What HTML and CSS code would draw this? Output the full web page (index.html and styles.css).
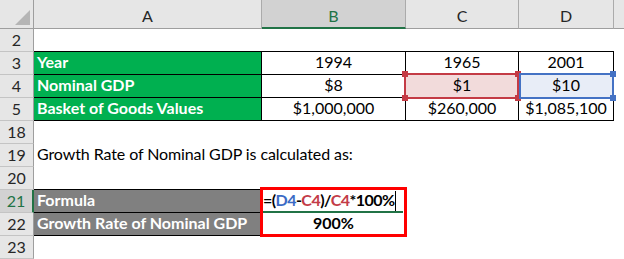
FILE: index.html
```html
<!DOCTYPE html>
<html>
<head>
<meta charset="utf-8">
<link rel="stylesheet" href="styles.css">
</head>
<body>
<div class="sheet">
  <div class="corner"><span class="tri"></span></div>
  <div class="ch">A</div>
  <div class="ch sel">B</div>
  <div class="ch">C</div>
  <div class="ch">D</div>
  <div class="ch last"></div>

  <div class="rh">2</div>
  <div class="c bb"></div><div class="c bb"></div><div class="c bb"></div><div class="c bb"></div><div class="c"></div>

  <div class="rh">3</div>
  <div class="c t lbl green">Year</div><div class="c t num">1994</div><div class="c t num">1965</div><div class="c t num">2001</div><div class="c"></div>

  <div class="rh">4</div>
  <div class="c t lbl green">Nominal GDP</div><div class="c t num">$8</div><div class="c t num pink">$1</div><div class="c t num ltblue">$10</div><div class="c"></div>

  <div class="rh">5</div>
  <div class="c t lbl green">Basket of Goods Values</div><div class="c t num">$1,000,000</div><div class="c t num">$260,000</div><div class="c t num">$1,085,100</div><div class="c"></div>

  <div class="rh">18</div>
  <div class="c"></div><div class="c"></div><div class="c"></div><div class="c"></div><div class="c"></div>

  <div class="rh">19</div>
  <div class="c text">Growth Rate of Nominal GDP is calculated as:</div><div class="c"></div><div class="c"></div><div class="c"></div><div class="c"></div>

  <div class="rh">20</div>
  <div class="c bb"></div><div class="c bb"></div><div class="c"></div><div class="c"></div><div class="c"></div>

  <div class="rh rsel">21</div>
  <div class="c t lbl gray">Formula</div><div class="c t formula">=(<span class="ref-b">D4</span>-<span class="ref-r">C4</span>)/<span class="ref-r">C4</span>*100%<span class="caret"></span></div><div class="c"></div><div class="c"></div><div class="c"></div>

  <div class="rh">22</div>
  <div class="c t lbl gray">Growth Rate of Nominal GDP</div><div class="c t num bold">900%</div><div class="c"></div><div class="c"></div><div class="c"></div>

  <div class="rh">23</div>
  <div class="c"></div><div class="c"></div><div class="c"></div><div class="c"></div><div class="c"></div>

  <div class="refbox red"><i class="h tl"></i><i class="h tr"></i><i class="h bl"></i><i class="h br"></i></div>
  <div class="refbox blue"><i class="h tr"></i><i class="h br"></i></div>
  <div class="active"><i class="ah"></i></div>
  <div class="frame"></div>
</div>
</body>
</html>
```

FILE: styles.css
```css
* { box-sizing: border-box; }
html, body { margin: 0; padding: 0; background: #fff; }
body { font-family: Lato, "Open Sans", sans-serif; font-size: 16px; color: #000; }

.sheet {
  position: relative;
  width: 624px;
  height: 259px;
  overflow: hidden;
  display: grid;
  grid-template-columns: 34px 228px 144px 113px 95px 1fr;
  grid-template-rows: 29px repeat(10, 23px);
}

.corner {
  position: relative;
  background: #e6e6e6;
  border-right: 1px solid #9e9e9e;
  border-bottom: 1px solid #9e9e9e;
}
.tri {
  position: absolute;
  left: 15px;
  top: 10px;
  width: 0;
  height: 0;
  border-left: 15px solid transparent;
  border-bottom: 15px solid #b5b5b5;
}

.ch {
  background: #e6e6e6;
  border-right: 1px solid #ababab;
  border-bottom: 1px solid #9e9e9e;
  text-align: center;
  padding-top: 5px;
  line-height: 22px;
  color: #262626;
}
.ch.sel {
  background: #d2d2d2;
  color: #217346;
  border-bottom: 2px solid #217346;
}
.ch.last { border-right: none; }

.rh {
  background: #e6e6e6;
  border-right: 1px solid #9e9e9e;
  border-bottom: 1px solid #c4c4c4;
  text-align: center;
  line-height: 21px;
  color: #262626;
}
.rh.rsel {
  background: #d2d2d2;
  color: #217346;
  border-right: 2px solid #217346;
}

.c {
  line-height: 20px;
  white-space: nowrap;
}
.bb { border-bottom: 1px solid #000; }
.t { border-right: 1px solid #000; border-bottom: 1px solid #000; }
.lbl { padding-left: 3px; font-weight: bold; color: #fff; }
.green { background: #00b050; }
.gray { background: #808080; }
.pink { background: #f2dbdb; }
.ltblue { background: #e8edf7; }
.num { text-align: center; }
.bold { font-weight: bold; }
.text { padding-left: 3px; overflow: visible; letter-spacing: -0.1px; }

.formula {
  font-weight: bold;
  padding-left: 1px;
  letter-spacing: -0.55px;
}
.ref-b { color: #3b6bc5; }
.ref-r { color: #c33b47; }
.caret {
  display: inline-block;
  width: 1px;
  height: 20px;
  background: #000;
  vertical-align: -5px;
  margin-left: 1px;
}

.refbox {
  position: absolute;
  top: 73px;
  height: 26px;
  border: 2px solid;
  background: transparent;
}
.refbox.red {
  left: 404px;
  width: 115px;
  border-color: #c43b45;
}
.refbox.blue {
  left: 519px;
  width: 95px;
  border-color: #4472c4;
}
.h {
  position: absolute;
  width: 6px;
  height: 6px;
}
.red .h { background: #c43b45; }
.blue .h { background: #4472c4; }
.h.tl { left: -4px; top: -4px; }
.h.tr { right: -4px; top: -4px; }
.h.bl { left: -4px; bottom: -4px; }
.h.br { right: -4px; bottom: -4px; }

.active {
  position: absolute;
  left: 263px;
  top: 211px;
  width: 143px;
  height: 2px;
  background: #217346;
}
.ah {
  position: absolute;
  right: -2px;
  top: -2px;
  width: 5px;
  height: 5px;
  background: #217346;
  border: 1px solid #fff;
}

.frame {
  position: absolute;
  left: 260px;
  top: 187px;
  width: 147px;
  height: 50px;
  border: 3px solid #ff0000;
}
```
